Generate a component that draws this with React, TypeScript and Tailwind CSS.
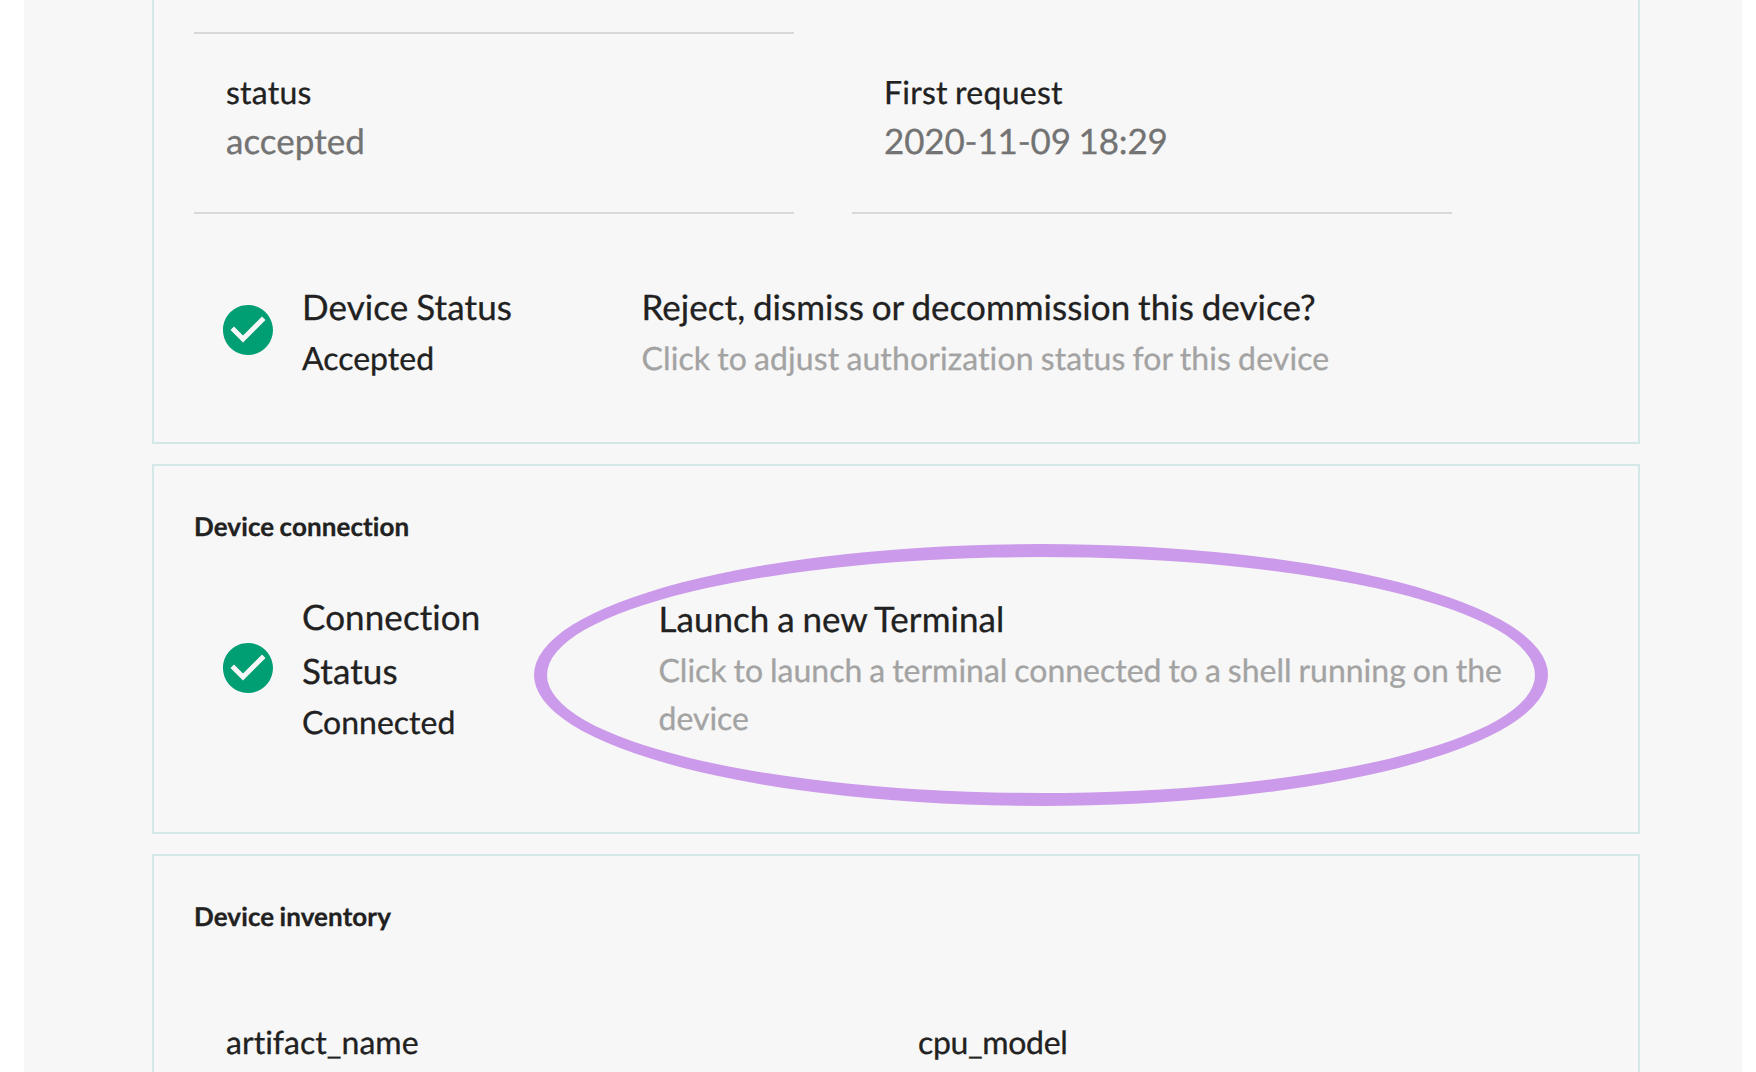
import type { ReactNode } from 'react';

function CheckCircle() {
  return (
    <svg viewBox="0 0 24 24" className="size-[60px] shrink-0 fill-[#009e73]">
      <path d="M12 2C6.48 2 2 6.48 2 12s4.48 10 10 10 10-4.48 10-10S17.52 2 12 2zm-2 15l-5-5 1.41-1.41L10 14.17l7.59-7.59L19 8l-9 9z" />
    </svg>
  );
}

function Attribute({ label, value, valueClass = '' }: { label: string; value: string; valueClass?: string }) {
  return (
    <div className="h-[180px] w-[600px] border-b-2 border-[#d9d9d9] px-8 pt-[34px]">
      <div className="text-[32px] leading-[48px] tracking-[0.25px]">{label}</div>
      <div className={`text-[35px] leading-[50px] text-[#737373] ${valueClass}`}>{value}</div>
    </div>
  );
}

function Status({ title, state, iconClass = '' }: { title: string; state: string; iconClass?: string }) {
  return (
    <div className="flex items-center gap-6">
      <div className={iconClass}>
        <CheckCircle />
      </div>
      <div className="w-[240px]">
        <div className="text-[35px] leading-[54px] tracking-[0.1px]">{title}</div>
        <div className="text-[32px] leading-[48px] tracking-normal">{state}</div>
      </div>
    </div>
  );
}

function Action({ title, hint, hintClass }: { title: string; hint: string; hintClass: string }) {
  return (
    <div>
      <div className="text-[35px] leading-[54px]">{title}</div>
      <div className={`text-[32px] leading-[48px] text-[#a3a3a3] ${hintClass}`}>{hint}</div>
    </div>
  );
}

function Heading({ children }: { children: ReactNode }) {
  return <h4 className="text-[26px] leading-[40px] font-bold tracking-[0.1px]">{children}</h4>;
}

export default function App() {
  return (
    <div className="h-[1072px] w-[1756px] overflow-hidden bg-white pr-[14px] pl-6 font-['Lato',sans-serif] tracking-[0.04px] text-[#212121] [-webkit-text-stroke:0.3px] [font-variant-ligatures:none] [text-rendering:geometricPrecision] [word-spacing:-1.2px]">
      <main className="flex h-full flex-col gap-5 bg-[#f7f7f7] pr-[102px] pl-32">
        <section className="h-[444px] shrink-0 border-2 border-t-0 border-[#d4e9e7] px-10">
          <div className="h-[34px] w-[600px] border-b-2 border-[#d9d9d9]" />
          <div className="flex gap-[58px]">
            <Attribute label="status" value="accepted" />
            <Attribute label="First request" value="2020-11-09 18:29" valueClass="tracking-[-0.15px]" />
          </div>
          <div className="flex pt-[66px] pl-6">
            <Status title="Device Status" state="Accepted" iconClass="-translate-y-px" />
            <div className="pl-[99.5px]">
              <Action
                title="Reject, dismiss or decommission this device?"
                hint="Click to adjust authorization status for this device"
                hintClass="tracking-[0.1px]"
              />
            </div>
          </div>
        </section>

        <section className="relative h-[370px] shrink-0 border-2 border-[#d4e9e7] px-10 pt-10">
          <Heading>Device connection</Heading>
          <div className="flex pt-[44px] pl-6">
            <Status title="Connection Status" state="Connected" />
            <div className="w-[980px] pt-[2px] pl-[116.5px]">
              <Action
                title="Launch a new Terminal"
                hint="Click to launch a terminal connected to a shell running on the device"
                hintClass="tracking-[-0.01px]"
              />
            </div>
          </div>
          <div className="pointer-events-none absolute top-[78px] left-[380px] h-[262px] w-[1014px] rounded-[50%] border-[13px] border-[#cb9aea]" />
        </section>

        <section className="h-[400px] shrink-0 border-2 border-[#d4e9e7] px-10 pt-10">
          <Heading>Device inventory</Heading>
          <div className="flex pt-[82px] pl-8 text-[32px] leading-[48px]">
            <div className="w-[692px]">artifact_name</div>
            <div className="tracking-[-0.35px]">cpu_model</div>
          </div>
        </section>
      </main>
    </div>
  );
}
